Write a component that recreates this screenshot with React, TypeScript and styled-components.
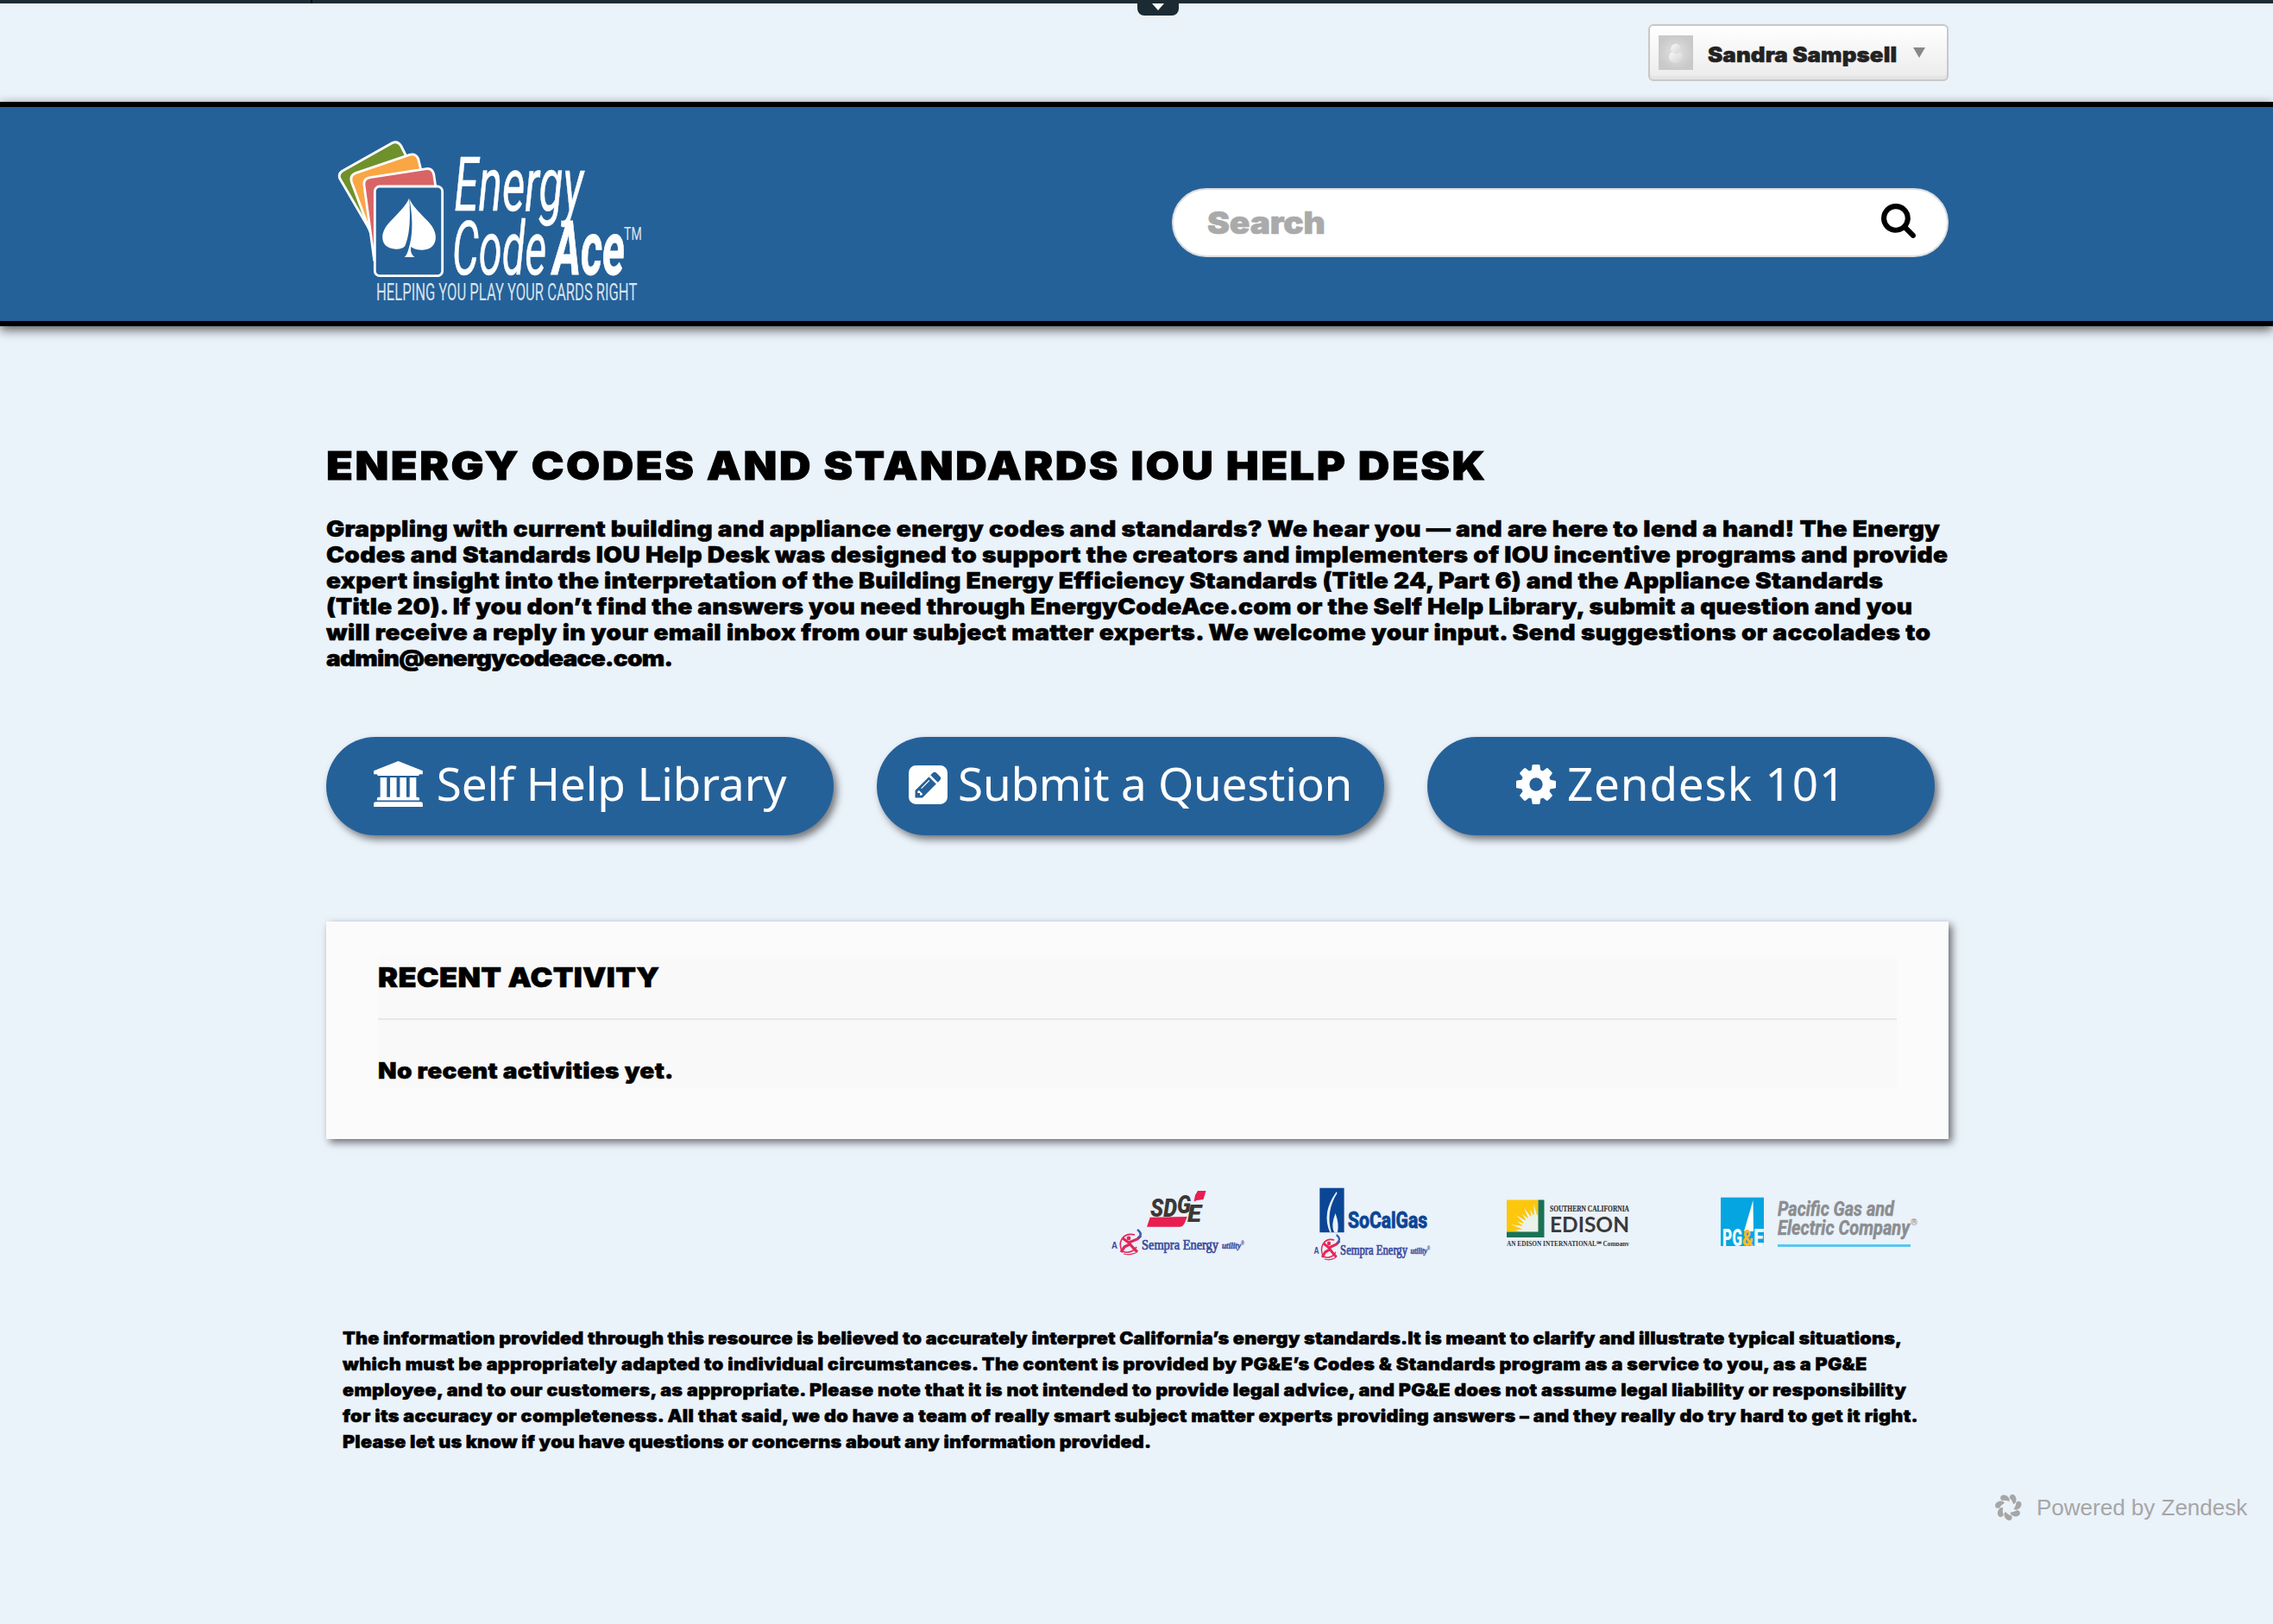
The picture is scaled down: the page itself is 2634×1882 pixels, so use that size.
import React from 'react';
import styled, { createGlobalStyle, css } from 'styled-components';

const heavy = '"Arial Black", Inter, "Liberation Sans", sans-serif';

const GlobalStyle = createGlobalStyle`
  * { box-sizing: border-box; }
  body {
    margin: 0;
    background: #eaf2fa;
    font-family: ${heavy};
    font-weight: 900;
    color: #000;
  }
  h1, h2, p { margin: 0; font-weight: 900; }
  svg { display: block; flex: none; }
`;

const wide = (scale: number, stroke: number) => css`
  transform: scaleX(${scale});
  transform-origin: 0 50%;
  -webkit-text-stroke: ${stroke}px currentColor;
  white-space: nowrap;
`;

const Page = styled.div`
  min-height: 1882px;
  display: flex;
  flex-direction: column;
  overflow: hidden;
`;

const AdminStrip = styled.div`
  position: relative;
  height: 4px;
  background: linear-gradient(90deg, #1c2b33 360px, #05090b 360px, #05090b 362px, #1c2b33 362px);
`;

const AdminTab = styled.div`
  position: absolute;
  left: 1318px;
  top: 0;
  width: 48px;
  height: 18px;
  display: flex;
  justify-content: center;
  padding-top: 4px;
  background: #1c2b33;
  border-radius: 0 0 8px 8px;
`;

const Triangle = styled.span<{ $w: number; $h: number; $color: string }>`
  width: 0;
  height: 0;
  border-left: ${p => p.$w / 2}px solid transparent;
  border-right: ${p => p.$w / 2}px solid transparent;
  border-top: ${p => p.$h}px solid ${p => p.$color};
`;

const UserBar = styled.div`
  height: 114px;
  width: 1880px;
  margin-left: 378px;
  padding-top: 24px;
  display: flex;
  justify-content: flex-end;
  align-items: flex-start;
`;

const UserButton = styled.div`
  width: 348px;
  height: 66px;
  padding: 0 25px 0 10px;
  display: flex;
  align-items: center;
  border: 2px solid #c8c8c8;
  border-radius: 6px;
  background: linear-gradient(#fff, #ebebeb);
  box-shadow: inset 0 -4px 0 #e4e4e4;
`;

const UserName = styled.span`
  margin: 5px 18px 0 17px;
  width: 220px;
  font-size: 24px;
  line-height: 30px;
  letter-spacing: 0.09px;
  color: #222;
  ${wide(1.08, 0.5)}
`;

const Header = styled.header`
  height: 260px;
  border-top: 6px solid #000;
  border-bottom: 6px solid #000;
  background: #256199;
  box-shadow: 0 4px 12px rgba(0, 0, 0, 0.65);
`;

const HeaderInner = styled.div`
  width: 1880px;
  margin-left: 378px;
  display: flex;
  justify-content: space-between;
  align-items: flex-start;
  padding-top: 6px;
`;

const SearchBox = styled.div`
  width: 900px;
  height: 80px;
  margin-top: 88px;
  padding: 0 36px 0 39px;
  display: flex;
  align-items: center;
  justify-content: space-between;
  background: #fff;
  border: 2px solid #ddd;
  border-radius: 40px;
`;

const SearchText = styled.span`
  font-size: 36px;
  letter-spacing: -0.1px;
  color: #aaa;
  ${wide(1.08, 0.7)}
`;

const SearchIcon = styled.svg`
  margin-bottom: 4px;
`;

const Main = styled.main`
  width: 1880px;
  margin-left: 378px;
`;

const Title = styled.h1`
  margin-top: 132px;
  font-size: 46px;
  line-height: 58px;
  letter-spacing: 2.23px;
  ${wide(1.1, 0.9)}
`;

const Intro = styled.p`
  margin-top: 30px;
  font-size: 26px;
  line-height: 30px;
`;

const Line = styled.span<{ $ls: number }>`
  display: block;
  letter-spacing: ${p => p.$ls}px;
  ${wide(1.08, 0.5)}
`;

const Actions = styled.div`
  display: flex;
  gap: 50px;
  margin-top: 76px;
`;

const Action = styled.a<{ $gap: number }>`
  width: 588px;
  height: 114px;
  display: flex;
  align-items: center;
  justify-content: center;
  gap: ${p => p.$gap}px;
  border-radius: 57px;
  background: #256199;
  color: #fff;
  box-shadow: 4px 5px 9px rgba(0, 0, 0, 0.5);
  font-family: "Lucida Sans", "Noto Sans", "Open Sans", sans-serif;
  font-weight: 400;
  font-size: 53px;
  line-height: 72px;
`;

const ActionLabel = styled.span<{ $ls: number }>`
  padding-bottom: 6px;
  letter-spacing: ${p => p.$ls}px;
  white-space: nowrap;
`;

const ActionIcon = styled.svg<{ $up: number }>`
  margin-bottom: ${p => p.$up}px;
`;

const Panel = styled.section`
  margin-top: 100px;
  height: 252px;
  padding: 40px 60px;
  background: #fbfbfb;
  box-shadow: 4px 4px 9px rgba(0, 0, 0, 0.55);
`;

const PanelBody = styled.div`
  height: 153px;
  background: #f9f9f9;
`;

const PanelHead = styled.div`
  height: 74px;
  padding-top: 5px;
  border-bottom: 2px solid #e8e8e8;
`;

const PanelTitle = styled.h2`
  font-size: 32px;
  line-height: 40px;
  letter-spacing: 0.27px;
  ${wide(1.08, 0.6)}
`;

const PanelText = styled.p`
  padding-top: 44px;
  font-size: 26px;
  line-height: 30px;
`;

const Sponsors = styled.div`
  margin-top: 50px;
  padding-right: 30px;
  height: 100px;
  display: flex;
  justify-content: flex-end;
`;

const SponsorLogo = styled.svg<{ $gap: number }>`
  margin-left: ${p => p.$gap}px;
`;

const Disclaimer = styled.p`
  margin: 66px 0 0 19px;
  font-size: 20px;
  line-height: 30px;
`;

const Powered = styled.footer`
  display: flex;
  align-items: center;
  gap: 17px;
  margin: 45px 0 0 2312px;
  font-family: Helvetica, "Liberation Sans", sans-serif;
  font-weight: 400;
  font-size: 26px;
  line-height: 30px;
  color: #a6a6a6;
  white-space: nowrap;
`;

const Fit = (p: { x: number; y: number; w: number; size: number; fill: string; children: React.ReactNode; family?: string; weight?: number; italic?: boolean; stroke?: number }) => (
  <text
    x={p.x}
    y={p.y}
    textLength={p.w}
    lengthAdjust="spacingAndGlyphs"
    fontSize={p.size}
    fill={p.fill}
    stroke={p.stroke ? p.fill : 'none'}
    strokeWidth={p.stroke || 0}
    fontFamily={p.family || 'Roboto, sans-serif'}
    fontWeight={p.weight || 400}
    fontStyle={p.italic ? 'italic' : 'normal'}
  >
    {p.children}
  </text>
);

const Avatar = () => (
  <svg width="40" height="40" viewBox="0 0 40 40">
    <defs>
      <radialGradient id="av"><stop offset="0" stopColor="#e2e2e2" /><stop offset="1" stopColor="#c9c9c9" /></radialGradient>
      <linearGradient id="fig" x1="0" y1="0" x2="1" y2="1"><stop offset="0" stopColor="#fafafa" /><stop offset="1" stopColor="#d2d2d2" /></linearGradient>
    </defs>
    <rect width="40" height="40" fill="url(#av)" />
    <ellipse cx="20" cy="25" rx="8" ry="7" fill="url(#fig)" />
    <circle cx="20" cy="15.5" r="5.8" fill="url(#fig)" />
  </svg>
);

const EnergyCodeAce = () => (
  <svg width="370" height="226" viewBox="54 90 1110 678">
    <g stroke="#fff" strokeWidth="8.5" strokeLinejoin="round">
      <path fill="#6f912c" d="M336 250L314 207Q302 188 283 197L111 294Q94 304 102 322L206 500L300 400Z" />
      <path fill="#faa645" d="M386 300L374 252Q364 232 344 238L156 302Q136 310 142 332L212 520L320 420Z" />
      <path fill="#d96466" d="M436 360L428 305Q422 284 402 287L207 317Q183 321 186 344L221 605L320 500Z" />
      <rect x="223" y="348" width="235" height="311" rx="17" fill="#256199" />
    </g>
    <g fill="#fff">
      <path d="M342 390C333 414 302 443 273 474C234 516 245 566 297 566C312 566 322 563 328 555C345 515 346 460 344 408Z" />
      <path d="M343 390C351 414 383 443 412 474C450 516 439 568 388 569C370 569 357 565 349 558C346 574 350 584 361 594H326C335 586 339 572 345 548C355 510 354 455 346 408Z" />
    </g>
    <Fit x={499} y={432} w={449} size={262} fill="#fff" italic stroke={1.5}>Energy</Fit>
    <Fit x={492} y={653} w={328} size={262} fill="#fff" italic stroke={1.5}>Code</Fit>
    <Fit x={842} y={653} w={250} size={262} fill="#fff" italic weight={700} stroke={3}>Ace</Fit>
    <Fit x={1089} y={534} w={62} size={62} fill="#dfe8f1">TM</Fit>
    <Fit x={228} y={745} w={907} size={82} fill="#d8e3ee">HELPING YOU PLAY YOUR CARDS RIGHT</Fit>
  </svg>
);

const Sempra = ({ x, y, k }: { x: number; y: number; k: number }) => (
  <g transform={`translate(${x} ${y}) scale(${k} 1)`}>
    <Fit x={0} y={0} w={7} size={11} fill="#3b4a9e" family="Liberation Sans" weight={700}>A</Fit>
    <g fill="none" stroke="#e4265a">
      <path d="M27 -16C15 -19 8 -10 11 0C13 6 24 6 29 -2" strokeWidth="1.6" />
      <path d="M13 -12L20 -7L30 -11L34 -15M20 -7L25 -1L30 4M21 -5L15 -2L11 4" strokeWidth="3.2" />
      <path d="M14 6Q20 8 28 5" strokeWidth="1.2" />
    </g>
    <circle cx="20" cy="-12" r="2.4" fill="#e4265a" />
    <path d="M30 -22Q37 -17 31 -12" fill="none" stroke="#3b5fae" strokeWidth="2.6" />
    <Fit x={35} y={0.5} w={89} size={16} fill="#3b4a9e" family="Liberation Serif" stroke={0.7}>Sempra Energy</Fit>
    <Fit x={128} y={0} w={22} size={11} fill="#3b4a9e" family="Liberation Serif" italic weight={700} stroke={0.4}>utility</Fit>
    <Fit x={150} y={-4} w={4} size={7} fill="#2c3590" family="Liberation Sans" weight={700}>®</Fit>
  </g>
);

const rays = [4, 15, 26, 37, 48, 59, 70, 81];

const EdisonLogo = () => (
  <SponsorLogo $gap={86} width="142" height="74" viewBox="0 0 142 74">
    <rect x="0" y="20.5" width="36.5" height="37" fill="#fdc70c" />
    <g fill="#eaf2ea">
      <path d="M36.5 57.5H18Q17 44 27 40Q31 37 36.5 38Z" />
      {rays.map((a, i) => (
        <path key={a} transform={`rotate(${a} 36.5 57.5)`} d={`M20 55.5L${i % 2 ? 4 : 9} 57.5L20 59.5Z`} />
      ))}
    </g>
    <path d="M36.5 20.5h7V64H0v-6.5h36.5z" fill="#1a7257" />
    <Fit x={50} y={34} w={92} size={10} fill="#333" family="Liberation Serif" weight={700} stroke={0.2}>SOUTHERN CALIFORNIA</Fit>
    <Fit x={50} y={57.7} w={92} size={25} fill="#3a3a3a" family="Lato" weight={700}>EDISON</Fit>
    <Fit x={0} y={73.5} w={142} size={7.5} fill="#333" family="Liberation Serif" weight={700}>AN EDISON INTERNATIONAL℠ Company</Fit>
  </SponsorLogo>
);

const ZendeskMark = () => (
  <svg width="31" height="31" viewBox="-46 -46 92 92">
    {[0, 1, 2, 3, 4, 5, 6].map(i => (
      <path key={i} transform={`rotate(${(i * 360) / 7 - 2})`} fill="#a6a6a6" d="M-25 -38C-18 -46 -4 -42 2 -32C5 -27 5 -23 3 -19C-5 -23 -13 -24 -21 -23C-27 -27 -28 -33 -25 -38Z" />
    ))}
  </svg>
);

const intro: [string, number][] = [
  ['Grappling with current building and appliance energy codes and standards? We hear you — and are here to lend a hand! The Energy', 0.27],
  ['Codes and Standards IOU Help Desk was designed to support the creators and implementers of IOU incentive programs and provide', 0.316],
  ['expert insight into the interpretation of the Building Energy Efficiency Standards (Title 24, Part 6) and the Appliance Standards', 0.24],
  ['(Title 20). If you don’t find the answers you need through EnergyCodeAce.com or the Self Help Library, submit a question and you', 0.192],
  ['will receive a reply in your email inbox from our subject matter experts. We welcome your input. Send suggestions or accolades to', 0.311],
  ['admin@energycodeace.com.', -0.7],
];

const disclaimer: [string, number][] = [
  ['The information provided through this resource is believed to accurately interpret California’s energy standards.It is meant to clarify and illustrate typical situations,', 0.16],
  ['which must be appropriately adapted to individual circumstances. The content is provided by PG&E’s Codes & Standards program as a service to you, as a PG&E', 0.3],
  ['employee, and to our customers, as appropriate. Please note that it is not intended to provide legal advice, and PG&E does not assume legal liability or responsibility', 0.277],
  ['for its accuracy or completeness. All that said, we do have a team of really smart subject matter experts providing answers – and they really do try hard to get it right.', 0.285],
  ['Please let us know if you have questions or concerns about any information provided.', 0.16],
];

export default function App() {
  return (
    <Page>
      <GlobalStyle />
      <AdminStrip>
        <AdminTab><Triangle $w={14} $h={8} $color="#fff" /></AdminTab>
      </AdminStrip>
      <UserBar>
        <UserButton>
          <Avatar />
          <UserName>Sandra Sampsell</UserName>
          <Triangle $w={14} $h={12} $color="#888" />
        </UserButton>
      </UserBar>
      <Header>
        <HeaderInner>
          <EnergyCodeAce />
          <SearchBox>
            <SearchText>Search</SearchText>
            <SearchIcon width="40" height="40" viewBox="0 128 1664 1664">
              <path d="M1152 832q0-185-131.5-316.5t-316.5-131.5-316.5 131.5-131.5 316.5 131.5 316.5 316.5 131.5 316.5-131.5 131.5-316.5zm512 832q0 52-38 90t-90 38q-54 0-90-38l-343-342q-179 124-399 124-143 0-273.5-55.5t-225-150-150-225-55.5-273.5 55.5-273.5 150-225 225-150 273.5-55.5 273.5 55.5 225 150 150 225 55.5 273.5q0 220-124 399l343 343q37 37 37 90z" />
            </SearchIcon>
          </SearchBox>
        </HeaderInner>
      </Header>
      <Main>
        <Title>ENERGY CODES AND STANDARDS IOU HELP DESK</Title>
        <Intro>{intro.map(([t, ls]) => <Line key={t} $ls={ls}>{t}</Line>)}</Intro>
        <Actions>
          <Action $gap={16}>
            <ActionIcon $up={6} width="57" height="53" viewBox="0 0 1920 1792" fill="#fff">
              <path d="M960 0l960 384v128h-128q0 26-20.5 45t-48.5 19h-1526q-28 0-48.5-19t-20.5-45h-128v-128zm-704 640h256v768h128v-768h256v768h128v-768h256v768h128v-768h256v768h59q28 0 48.5 19t20.5 45v64h-1664v-64q0-26 20.5-45t48.5-19h59v-768zm1595 960q28 0 48.5 19t20.5 45v128h-1920v-128q0-26 20.5-45t48.5-19h1782z" />
            </ActionIcon>
            <ActionLabel $ls={-0.1}>Self Help Library</ActionLabel>
          </Action>
          <Action $gap={12}>
            <ActionIcon $up={4} width="45" height="45" viewBox="0 0 1536 1536" fill="#fff">
              <path d="M404 980l152 152-52 52h-56v-96h-96v-56zm414-390q14 13-3 30l-291 291q-17 17-30 3-14-13 3-30l291-291q17-17 30-3zm-274 690l544-544-288-288-544 544v288h288zm608-608l92-92q28-28 28-68t-28-68l-152-152q-28-28-68-28t-68 28l-92 92zm384-384v960q0 119-84.5 203.5t-203.5 84.5h-960q-119 0-203.5-84.5t-84.5-203.5v-960q0-119 84.5-203.5t203.5-84.5h960q119 0 203.5 84.5t84.5 203.5z" />
            </ActionIcon>
            <ActionLabel $ls={-0.25}>Submit a Question</ActionLabel>
          </Action>
          <Action $gap={13}>
            <ActionIcon $up={4} width="46" height="46" viewBox="0 128 1536 1536" fill="#fff">
              <path d="M1024 896q0-106-75-181t-181-75-181 75-75 181 75 181 181 75 181-75 75-181zm512-109v222q0 12-8 23t-20 13l-185 28q-19 54-39 91 35 50 107 138 10 12 10 25t-9 23q-27 37-99 108t-94 71q-12 0-26-9l-138-108q-44 23-91 38-16 136-29 186-7 28-36 28h-222q-14 0-24.5-8.5t-11.5-21.5l-28-184q-49-16-90-37l-141 107q-10 9-25 9-14 0-25-11-126-114-165-168-7-10-7-23 0-12 8-23 15-21 51-66.5t54-70.5q-27-50-41-99l-183-27q-13-2-21-12.5t-8-23.5v-222q0-12 8-23t19-13l186-28q14-46 39-92-40-57-107-138-10-12-10-24 0-10 9-23 26-36 98.5-107.5t94.5-71.5q13 0 26 10l138 107q44-23 91-38 16-136 29-186 7-28 36-28h222q14 0 24.5 8.5t11.5 21.5l28 184q49 16 90 37l142-107q9-9 24-9 13 0 25 10 129 119 165 170 7 8 7 22 0 12-8 23-15 21-51 66.5t-54 70.5q26 50 41 98l183 28q13 2 21 12.5t8 23.5z" />
            </ActionIcon>
            <ActionLabel $ls={0.85}>Zendesk 101</ActionLabel>
          </Action>
        </Actions>
        <Panel>
          <PanelBody>
            <PanelHead><PanelTitle>RECENT ACTIVITY</PanelTitle></PanelHead>
            <PanelText><Line $ls={0.25}>No recent activities yet.</Line></PanelText>
          </PanelBody>
        </Panel>
        <Sponsors>
          <SponsorLogo $gap={0} width="160" height="100" viewBox="0 0 160 100">
            <Fit x={47} y={40} w={31} size={30} fill="#3b3835" weight={900} italic>SD</Fit>
            <Fit x={78} y={36} w={16} size={30} fill="#3b3835" weight={900} italic>G</Fit>
            <Fit x={90} y={45.5} w={16} size={27} fill="#3b3835" weight={900} italic>E</Fit>
            <path d="M97.5 22.5L99 15L102 10H111.5L108.5 20L101 21Z" fill="#e81e50" />
            <path d="M43 51.7L46.7 40.7L89.7 40L87 47Q85 51.7 81 51.7Z" fill="#e81e50" />
            <Sempra x={2} y={77} k={1} />
          </SponsorLogo>
          <SponsorLogo $gap={74} width="140" height="100" viewBox="0 0 140 100">
            <rect x="9.3" y="6.7" width="28.3" height="51.5" fill="#0b4595" />
            <path d="M29 12Q12 36 22 58Q15 34 29 12Z" fill="#eaf2fa" stroke="#eaf2fa" strokeWidth="1.6" />
            <path d="M27.5 36Q22 50 26 58H30Q32 48 27.5 36Z" fill="#eaf2fa" />
            <Fit x={42} y={52.7} w={92} size={26} fill="#0b4595" weight={700} stroke={0.9}>SoCalGas</Fit>
            <Sempra x={2.5} y={83} k={0.875} />
          </SponsorLogo>
          <EdisonLogo />
          <SponsorLogo $gap={104} width="236" height="100" viewBox="0 0 236 100">
            <rect x="2" y="17.7" width="50" height="56.3" fill="#05a5e1" />
            <path d="M39.5 21L29 57H40Z" fill="#fff" />
            <Fit x={4} y={74} w={23} size={27} fill="#f2fafd" weight={900}>PG</Fit>
            <Fit x={27} y={74} w={13} size={25} fill="#fcb928" weight={900}>&amp;</Fit>
            <Fit x={40} y={74} w={12} size={27} fill="#f2fafd" weight={900}>E</Fit>
            <Fit x={68} y={39.3} w={135} size={23.5} fill="#8b8d90" weight={700} italic stroke={0.5}>Pacific Gas and</Fit>
            <Fit x={68} y={61} w={153} size={23} fill="#8b8d90" weight={700} italic stroke={0.5}>Electric Company</Fit>
            <Fit x={222} y={50} w={8} size={10} fill="#8b8d90" weight={700}>®</Fit>
            <rect x="68" y="72" width="154" height="3" fill="#5ac6f0" />
          </SponsorLogo>
        </Sponsors>
        <Disclaimer>{disclaimer.map(([t, ls]) => <Line key={t} $ls={ls}>{t}</Line>)}</Disclaimer>
      </Main>
      <Powered><ZendeskMark />Powered by Zendesk</Powered>
    </Page>
  );
}
